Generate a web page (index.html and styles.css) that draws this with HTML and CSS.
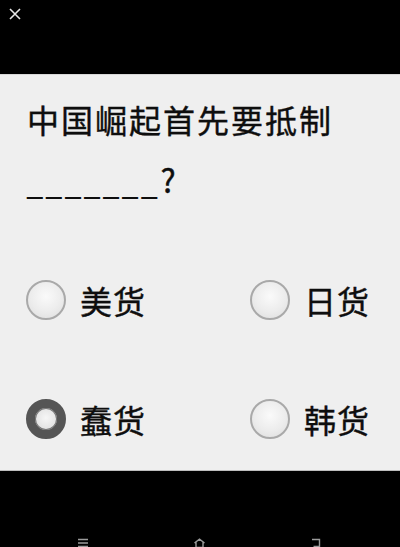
FILE: index.html
```html
<!DOCTYPE html>
<html lang="zh">
<head>
<meta charset="utf-8">
<link rel="stylesheet" href="styles.css">
</head>
<body>
<div class="screen">
  <header class="topbar">
    <svg class="close" width="12" height="12" viewBox="0 0 12 12"><path d="M1 1L11 11M11 1L1 11" stroke="#e6e6e6" stroke-width="1.6" fill="none"/></svg>
  </header>
  <main class="panel">
    <div class="question">
      <div class="qline">中国崛起首先要抵制</div>
      <div class="qline"><span class="blank">_______</span>?</div>
    </div>
    <div class="options">
      <label class="opt"><span class="radio"></span><span class="txt">美货</span></label>
      <label class="opt"><span class="radio"></span><span class="txt">日货</span></label>
      <label class="opt"><span class="radio on"></span><span class="txt">蠢货</span></label>
      <label class="opt"><span class="radio"></span><span class="txt">韩货</span></label>
    </div>
  </main>
  <footer class="navbar">
    <svg class="nav" width="12" height="10" viewBox="0 0 12 10"><path d="M1 1.5H11M1 5H11M1 8.5H11" stroke="#9a9a9a" stroke-width="1.4" fill="none"/></svg>
    <svg class="nav" width="13" height="10" viewBox="0 0 13 10"><path d="M1.5 5L6.5 1.2L11.5 5M3 4V9.5H10V4" stroke="#9a9a9a" stroke-width="1.4" fill="none"/></svg>
    <svg class="nav" width="12" height="10" viewBox="0 0 12 10"><path d="M2 1.5H9.5V8.5H3.5" stroke="#9a9a9a" stroke-width="1.4" fill="none"/></svg>
  </footer>
</div>
</body>
</html>
```
FILE: styles.css
```css
html, body {
  margin: 0;
  padding: 0;
  background: #000;
}
.screen {
  width: 400px;
  height: 547px;
  display: flex;
  flex-direction: column;
  font-family: "Noto Sans CJK SC", "Noto Sans", sans-serif;
  overflow: hidden;
}
.topbar {
  height: 74px;
  background: #000;
  display: flex;
  align-items: flex-start;
  padding: 8px 0 0 9px;
  box-sizing: border-box;
}
.close {
  display: block;
}
.panel {
  height: 397px;
  background: #efefef;
  border-top: 1px solid #d8d8d8;
  border-bottom: 1px solid #bdbdbd;
  box-sizing: border-box;
  padding: 14px 0 0 0;
  display: flex;
  flex-direction: column;
}
.question {
  padding-left: 27px;
  color: #0e0e0e;
  font-size: 32px;
  line-height: 60px;
  letter-spacing: 2px;
  -webkit-text-stroke: 0.4px #0e0e0e;
}
.qline {
  height: 60px;
  white-space: nowrap;
}
.blank {
  display: inline-block;
  letter-spacing: 3.5px;
  font-family: "Liberation Sans", sans-serif;
  font-weight: bold;
  font-size: 28px;
  line-height: 40px;
  -webkit-text-stroke: 0;
  transform: translateY(3px) scaleY(1.9);
  transform-origin: 50% 85%;
}
.options {
  margin-top: 61px;
  padding-left: 26px;
  display: grid;
  grid-template-columns: 224px 1fr;
  grid-auto-rows: 60px;
  row-gap: 59px;
}
.opt {
  display: flex;
  align-items: center;
  gap: 14px;
}
.radio {
  width: 40px;
  height: 40px;
  border-radius: 50%;
  box-sizing: border-box;
  border: 2px solid #a9a9a9;
  background: radial-gradient(circle at 50% 40%, #fafafa 0%, #ececec 55%, #dcdcdc 100%);
  flex: none;
}
.radio.on {
  border: 9px solid #555;
  background: radial-gradient(circle at 50% 45%, #f6f6f6 0%, #e2e2e2 70%, #bdbdbd 100%);
  box-shadow: inset 0 0 0 1px #777;
}
.txt {
  font-size: 32px;
  color: #0e0e0e;
  letter-spacing: 1px;
  line-height: 40px;
  -webkit-text-stroke: 0.4px #0e0e0e;
}
.navbar {
  flex: 1;
  background: #000;
  display: flex;
  justify-content: space-between;
  align-items: flex-end;
  padding: 0 78px 0 77px;
}
.nav {
  display: block;
  margin-bottom: -1px;
}
```
